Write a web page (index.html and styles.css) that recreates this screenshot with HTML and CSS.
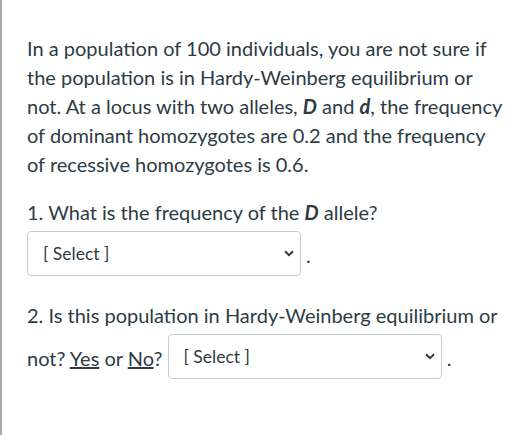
FILE: index.html
```html
<!DOCTYPE html>
<html lang="en">
<head>
<meta charset="utf-8">
<title>Question</title>
<link rel="stylesheet" href="styles.css">
</head>
<body>
<div class="question">
  <p class="text">In a population of 100 individuals, you are not sure if the population is in Hardy-Weinberg equilibrium or not. At a locus with two alleles, <strong><em>D</em></strong> and <strong><em>d</em></strong>, the frequency of dominant homozygotes are 0.2 and the frequency of recessive homozygotes is 0.6.</p>
  <p class="text">1. What is the frequency of the <strong><em>D</em></strong> allele?<br><span class="select-wrap"><select class="answer"><option>[ Select ]</option></select><svg class="chevron" width="10" height="7" viewBox="0 0 10 7"><path d="M1 1.2 L5 5.2 L9 1.2" fill="none" stroke="#2d3b45" stroke-width="2"/></svg></span> .</p>
  <p class="text">2. Is this population in Hardy-Weinberg equilibrium or not? <u>Yes</u> or <u>No</u>? <span class="select-wrap"><select class="answer"><option>[ Select ]</option></select><svg class="chevron" width="10" height="7" viewBox="0 0 10 7"><path d="M1 1.2 L5 5.2 L9 1.2" fill="none" stroke="#2d3b45" stroke-width="2"/></svg></span> .</p>
</div>
</body>
</html>
```

FILE: styles.css
```css
html, body {
  margin: 0;
  padding: 0;
  background: #ffffff;
}

.question {
  box-sizing: border-box;
  min-height: 100vh;
  border-left: 2px solid #a9a9a9;
  padding: 34px 4px 0 25px;
  font-family: Lato, "Open Sans", sans-serif;
  font-size: 20px;
  line-height: 29px;
  color: #2d3b45;
}

.text {
  margin: 0 0 19px 0;
}

.select-wrap {
  position: relative;
  display: inline-block;
  vertical-align: 3px;
  margin: 4px 0 6px 0;
}

.answer {
  -webkit-appearance: none;
  appearance: none;
  box-sizing: border-box;
  width: 274px;
  height: 45px;
  margin: 0;
  padding: 0 30px 0 15px;
  border: 1px solid #c7cdd1;
  border-radius: 4px;
  background: #ffffff;
  font-family: Lato, "Open Sans", sans-serif;
  font-size: 17.5px;
  color: #2d3b45;
}

.chevron {
  position: absolute;
  right: 7px;
  top: 19px;
}
```
